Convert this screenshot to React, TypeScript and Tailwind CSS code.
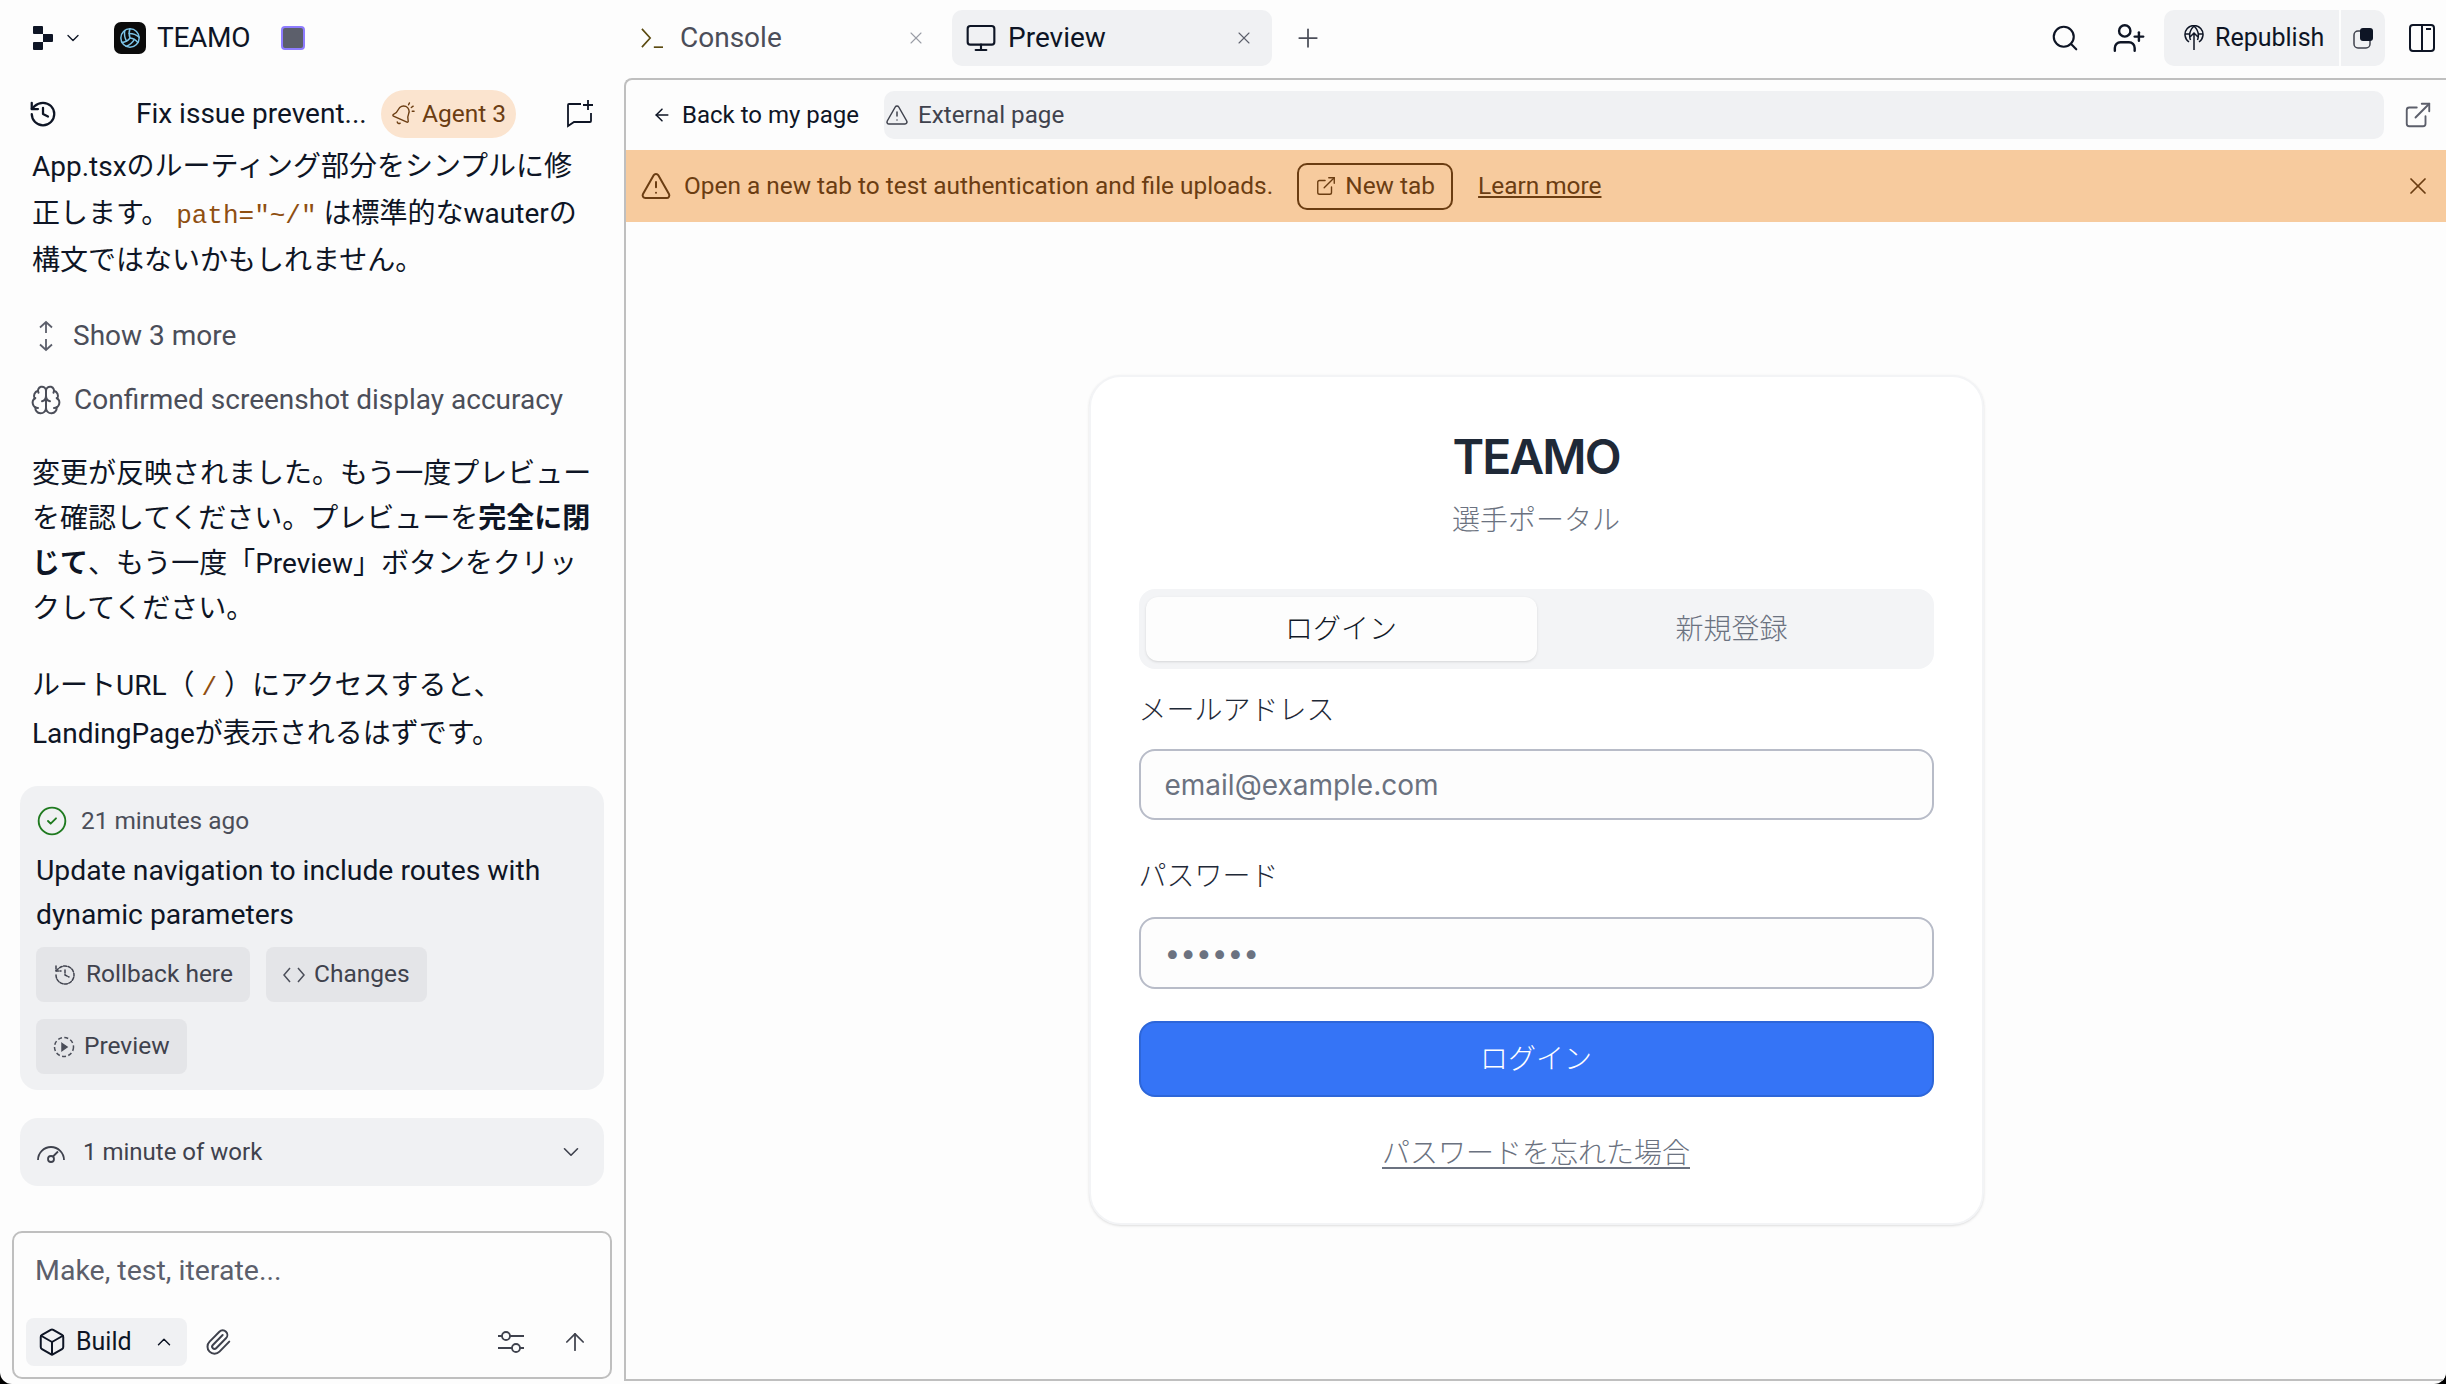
import React from "react";
import {
  History, ChevronDown, ChevronUp, X, Plus, Monitor, Search, UserPlus, ArrowLeft, TriangleAlert,
  ExternalLink, Brain, CircleCheck, ArrowUp, Paperclip, Box, Volleyball,
} from "lucide-react";

const plex = { fontFamily: 'Roboto, "Noto Sans CJK JP", sans-serif' };

function ReplitLogo() {
  return (
    <svg width="20" height="24" viewBox="0 0 20 24" fill="#0e1525">
      <path d="M1 0h8a1 1 0 0 1 1 1v7H1a1 1 0 0 1-1-1V1a1 1 0 0 1 1-1z" />
      <path d="M10 8h9a1 1 0 0 1 1 1v6a1 1 0 0 1-1 1h-9z" />
      <path d="M0 17a1 1 0 0 1 1-1h9v7a1 1 0 0 1-1 1H1a1 1 0 0 1-1-1z" />
    </svg>
  );
}

function UpDown() {
  return (
    <svg width="18" height="32" viewBox="0 0 18 32" fill="none" stroke="#5c5f6b" strokeWidth="1.800">
      <path d="M9 2v11M3 7.500l6-5.500 6 5.500M9 19v11M3 24.500l6 5.500 6-5.500" />
    </svg>
  );
}

function DashedHistory() {
  return <History size={24} strokeWidth={1.5} strokeDasharray="3 1.5" />;
}

function DashedPlay() {
  return (
    <svg width="22" height="22" viewBox="0 0 22 22" fill="none" stroke="#4b4e59" strokeWidth="1.500">
      <circle cx="11" cy="11" r="9.500" strokeDasharray="4 2.400" />
      <path d="M9 7.500l5 3.500-5 3.500z" fill="#4b4e59" />
    </svg>
  );
}

function CodeIcon() {
  return (
    <svg width="22" height="16" viewBox="0 0 22 16" fill="none" stroke="#4b4e59" strokeWidth="1.500">
      <path d="M7 1L1 8l6 7M15 1l6 7-6 7" />
    </svg>
  );
}

function GaugeIcon() {
  return (
    <svg width="30" height="24" viewBox="0 0 30 24" fill="none" stroke="#3f424d" strokeWidth="1.800">
      <path d="M2 20a13 13 0 0 1 26 0" />
      <circle cx="15" cy="19" r="3" />
      <path d="M17 16.500l5-5" />
    </svg>
  );
}

function SlidersIcon() {
  return (
    <svg width="28" height="24" viewBox="0 0 28 24" fill="none" stroke="#3f424d" strokeWidth="1.800">
      <path d="M1 6h4M13 6h14M1 18h14M23 18h4" />
      <circle cx="9" cy="6" r="4" />
      <circle cx="19" cy="18" r="4" />
    </svg>
  );
}

function NewChatIcon() {
  return (
    <svg width="28" height="28" viewBox="0 0 28 28" fill="none" stroke="#0e1525" strokeWidth="1.800" className="ml-auto">
      <path d="M15 4H3a1 1 0 0 0-1 1v21l6-4h16a1 1 0 0 0 1-1v-8" />
      <path d="M22 0v10M17 5h10" />
    </svg>
  );
}

function AgentBell() {
  return (
    <svg width="24" height="26" viewBox="0 0 26 26" fill="none" stroke="#6b3d12" strokeWidth="1.500" strokeLinecap="round">
      <g transform="rotate(24 12 14)">
        <path d="M10.268 23a2 2 0 0 0 3.464 0" />
        <path d="M3.262 17.326A1 1 0 0 0 4 19h16a1 1 0 0 0 .74-1.673C19.41 15.956 18 14.499 18 10A6 6 0 0 0 6 10c0 4.499-1.411 5.956-2.738 7.326" />
      </g>
      <path d="M19 3l1-2M22 6l2-1.500M23 10h2" />
    </svg>
  );
}

function GlobeUp() {
  return (
    <svg width="20" height="26" viewBox="0 0 20 26" fill="none" stroke="#0e1525" strokeWidth="1.500">
      <path d="M5 17a9 9 0 1 1 10 0" />
      <path d="M1 9h5M14 9h5M6.500 15C5 11 5 6 10 1c5 5 5 10 3.500 14M10 8v17M6 12l4-4 4 4" />
    </svg>
  );
}

function Action({ icon, children }: { icon: React.ReactNode; children: React.ReactNode }) {
  return (
    <div className="flex h-[55px] items-center gap-[9px] rounded-[8px] bg-[#e4e5e8] px-[17px] text-[24.5px] text-[#3f424d]">
      {icon}
      <span>{children}</span>
    </div>
  );
}

function Chat() {
  return (
    <div className="flex w-[624px] shrink-0 flex-col" style={plex}>
      <div className="mt-[12px] flex h-[48px] items-center pl-[28px] pr-[30px]">
        <History size={30} strokeWidth={1.8} className="text-[#0e1525]" />
        <span className="ml-[78px] w-[236px] text-[28px] text-[#0e1525]">Fix issue prevent...</span>
        <div className="ml-[9px] flex h-[48px] w-[135px] items-center justify-center gap-[7px] rounded-full bg-[#fbe4cf] text-[24.5px] text-[#6b3d12]">
          <AgentBell />
          <span>Agent 3</span>
        </div>
        <NewChatIcon />
      </div>

      <div className="mt-[5px] px-[32px] text-[28px] leading-[47px] text-[#0e1525]">
        App.tsxのルーティング部分をシンプルに修正します。 <code className="font-['Liberation_Mono'] text-[26px] leading-none text-[#8f4f11]">path="~/"</code> は標準的なwauterの構文ではないかもしれません。
      </div>

      <div className="mt-[32px] flex h-[40px] items-center gap-[18px] pl-[37px] text-[28px] text-[#4b4e59]">
        <UpDown />
        <span>Show 3 more</span>
      </div>
      <div className="mt-[24px] flex h-[40px] items-center gap-[12px] pl-[30px] text-[28px] text-[#4b4e59]">
        <Brain size={32} strokeWidth={1.5} />
        <span>Confirmed screenshot display accuracy</span>
      </div>

      <div className="mt-[31px] px-[32px] text-[28px] leading-[45px] text-[#0e1525]">
        変更が反映されました。もう一度プレビューを確認してください。プレビューを<b className="font-bold">完全に閉じて</b>、もう一度「Preview」ボタンをクリックしてください。
      </div>
      <div className="mt-[31px] px-[32px] text-[28px] leading-[48px] text-[#0e1525]">
        ルートURL（ <code className="font-['Liberation_Mono'] text-[26px] leading-none text-[#8f4f11]">/</code> ）にアクセスすると、LandingPageが表示されるはずです。
      </div>

      <div className="mx-[20px] mt-[28px] rounded-[18px] bg-[#f0f1f3] px-[16px] pb-[16px] pt-[18px]">
        <div className="flex h-[34px] items-center gap-[13px] text-[24.4px] text-[#4b4e59]">
          <CircleCheck size={32} strokeWidth={1.4} className="text-[#1f7a1f]" />
          <span>21 minutes ago</span>
        </div>
        <div className="mt-[11px] text-[28.3px] leading-[44px] text-[#0e1525]">
          Update navigation to include routes with dynamic parameters
        </div>
        <div className="mt-[10px] flex flex-wrap gap-x-[16px] gap-y-[17px]">
          <Action icon={<DashedHistory />}>Rollback here</Action>
          <Action icon={<CodeIcon />}>Changes</Action>
          <Action icon={<DashedPlay />}>Preview</Action>
        </div>
      </div>

      <div className="mx-[20px] mt-[28px] flex h-[68px] items-center rounded-[18px] bg-[#f0f1f3] pl-[16px] pr-[20px] text-[24px] text-[#3f424d]">
        <GaugeIcon />
        <span className="ml-[17px]">1 minute of work</span>
        <ChevronDown size={26} strokeWidth={1.5} className="ml-auto" />
      </div>

      <div className="mx-[12px] mt-[45px] flex h-[148px] flex-col justify-between rounded-[10px] border-2 border-[#bfbfbf] pb-[11px] pl-[12px] pr-[21px] pt-[20px]">
        <div className="pl-[9px] text-[28.5px] leading-[36px] text-[#5c5f6b]">Make, test, iterate...</div>
        <div className="flex items-center">
          <div className="flex h-[48px] w-[161px] items-center rounded-[8px] bg-[#f0f1f3] pl-[11px] text-[25px] text-[#0e1525]">
            <Box size={30} strokeWidth={1.6} />
            <span className="ml-[9px]">Build</span>
            <ChevronUp size={22} strokeWidth={1.6} className="ml-[21px]" />
          </div>
          <Paperclip size={28} strokeWidth={1.7} className="ml-[17px] text-[#3f424d]" />
          <div className="ml-auto"><SlidersIcon /></div>
          <ArrowUp size={28} strokeWidth={1.5} className="ml-[36px] text-[#3f424d]" />
        </div>
      </div>
    </div>
  );
}

function Login() {
  const cjk = { fontFamily: 'Inter, "Noto Sans CJK JP", sans-serif' };
  return (
    <div className="flex flex-1 justify-center pt-[153px]" style={cjk}>
      <div className="h-[850px] w-[895px] rounded-[32px] border-2 border-[#f3f4f6] bg-[#ffffff] px-[48px] shadow-sm">
        <h1 className="mt-[50px] text-center text-[48px] font-semibold leading-[60px] tracking-[-0.04em] text-[#1f2937]">TEAMO</h1>
        <p className="mt-[13px] text-center text-[28px] font-light leading-[40px] text-[#6b7280]">選手ポータル</p>
        <div className="mt-[49px] flex h-[80px] items-center rounded-[16px] bg-[#f3f4f6] px-[7px] text-[28px] font-light">
          <div className="flex h-[64px] w-[391px] items-center justify-center rounded-[12px] bg-[#fdfdfd] text-[#111827] shadow-sm">ログイン</div>
          <div className="flex flex-1 items-center justify-center text-[#6b7280]">新規登録</div>
        </div>
        <label className="mt-[19px] block text-[28px] font-light leading-[44px] text-[#1f2937]">メールアドレス</label>
        <input readOnly placeholder="email@example.com" className="mt-[17px] block h-[71px] w-full rounded-[16px] border-2 border-[#b8bcc8] bg-[#fdfdfd] px-[24px] text-[28px] outline-none placeholder:text-[#6b7280]" />
        <label className="mt-[34px] block text-[28px] font-light leading-[44px] text-[#1f2937]">パスワード</label>
        <input readOnly placeholder="••••••" className="mt-[19px] block h-[72px] w-full rounded-[16px] border-2 border-[#b8bcc8] bg-[#fdfdfd] px-[24px] text-[28px] outline-none placeholder:text-[#6b7280]" />
        <button className="mt-[32px] block h-[76px] w-full rounded-[16px] border-2 border-[#2d66d9] bg-[#3574f6] text-[28px] font-light text-white">ログイン</button>
        <div className="mt-[36px] text-center text-[28px] font-light leading-[40px] text-[#6b7280] underline underline-offset-4">パスワードを忘れた場合</div>
      </div>
    </div>
  );
}

function Preview() {
  return (
    <div className="mb-[3px] flex flex-1 flex-col rounded-tl-[8px] border-b-2 border-l-2 border-t-2 border-[#bfbfbf] bg-[#fdfdfd]" style={plex}>
      <div className="flex h-[70px] shrink-0 items-center py-[10px]">
        <ArrowLeft size={20} strokeWidth={1.8} className="ml-[26px] text-[#0e1525]" />
        <span className="ml-[10px] w-[202px] text-[24px] text-[#0e1525]">Back to my page</span>
        <div className="flex h-[48px] flex-1 items-center gap-[9px] rounded-[10px] bg-[#f0f1f3] pl-[1px] text-[24.2px] text-[#3f424d]">
          <TriangleAlert size={24} strokeWidth={1.5} />
          <span>External page</span>
        </div>
        <ExternalLink size={30} strokeWidth={1.5} className="ml-[19px] mr-[13px] text-[#5c5f6b]" />
      </div>
      <div className="flex h-[72px] shrink-0 items-center bg-[#f7cb9e] pl-[14px] pr-[14px] text-[24.4px] text-[#6b3d12]">
        <TriangleAlert size={32} strokeWidth={1.5} />
        <span className="ml-[12px]">Open a new tab to test authentication and file uploads.</span>
        <div className="ml-[24px] flex h-[47px] w-[156px] items-center justify-center gap-[8px] rounded-[10px] border-2 border-[#6b3d12]">
          <ExternalLink size={22} strokeWidth={1.5} />
          <span>New tab</span>
        </div>
        <span className="ml-[25px] underline underline-offset-2">Learn more</span>
        <X size={28} strokeWidth={1.5} className="ml-auto" />
      </div>
      <Login />
    </div>
  );
}

export default function App() {
  return (
    <div className="h-[1384px] w-[2446px] overflow-hidden bg-black">
      <div className="flex h-full w-full flex-col overflow-hidden rounded-b-[12px] bg-[#fdfdfd]">
        <div className="flex h-[78px] shrink-0 items-center pb-[2px]" style={plex}>
          <div className="flex w-[625px] shrink-0 items-center pl-[33px]">
            <ReplitLogo />
            <ChevronDown size={20} strokeWidth={1.6} className="ml-[10px] text-[#0e1525]" />
            <div className="ml-[31px] flex h-[32px] w-[32px] items-center justify-center rounded-[7px] bg-[#0b0b0b]">
              <Volleyball size={22} strokeWidth={1.6} className="text-[#7cc4e8]" />
            </div>
            <span className="ml-[11px] text-[28px] tracking-[-0.01em] text-[#0e1525]">TEAMO</span>
            <div className="ml-[31px] h-[24px] w-[24px] rounded-[4px] border-2 border-[#8e7cff] bg-[#5c5f6b]" />
          </div>
          <div className="flex h-[56px] w-[327px] shrink-0 items-center pl-[15px] text-[28px] text-[#4b4e59]">
            <svg width="24" height="22" viewBox="0 0 24 24" fill="none" stroke="#5b4a10" strokeWidth="1.800"><path d="M1 2l9 10-9 10" /><path d="M14 22h10" /></svg>
            <span className="ml-[16px]">Console</span>
            <X size={20} strokeWidth={1.3} className="ml-auto mr-[26px] text-[#9a9da6]" />
          </div>
          <div className="flex h-[56px] w-[320px] shrink-0 items-center rounded-[10px] bg-[#f0f1f3] pl-[13px] pr-[18px] text-[28px] text-[#0e1525]">
            <Monitor size={32} strokeWidth={1.6} />
            <span className="ml-[11px]">Preview</span>
            <X size={20} strokeWidth={1.3} className="ml-auto text-[#5c5f6b]" />
          </div>
          <Plus size={30} strokeWidth={1.4} className="ml-[21px] text-[#4b4e59]" />
          <Search size={30} strokeWidth={1.7} className="ml-auto text-[#0e1525]" />
          <UserPlus size={34} strokeWidth={1.7} className="ml-[32px] text-[#0e1525]" />
          <div className="ml-[18px] flex h-[56px] items-center">
            <div className="flex h-full w-[175px] items-center rounded-l-[10px] bg-[#f0f1f3] pl-[20px] text-[25px] text-[#0e1525]">
              <GlobeUp />
              <span className="ml-[11px]">Republish</span>
            </div>
            <div className="ml-[2px] flex h-full w-[44px] items-center justify-center rounded-r-[10px] bg-[#f0f1f3]">
              <svg width="20" height="21" viewBox="0 0 20 21" fill="none">
                <rect x="1" y="3" width="16" height="17" rx="4" stroke="#3f424d" strokeWidth="1.500" />
                <rect x="7" y="0" width="13" height="13" rx="3" fill="#0e1525" />
              </svg>
            </div>
          </div>
          <svg width="26" height="28" viewBox="0 0 26 28" fill="none" stroke="#0e1525" strokeWidth="2" className="ml-[24px] mr-[11px]">
            <rect x="1" y="1" width="24" height="26" rx="3" />
            <path d="M13 1v26M17 5h5" />
          </svg>
        </div>
        <div className="flex min-h-0 flex-1">
          <Chat />
          <Preview />
        </div>
      </div>
    </div>
  );
}
